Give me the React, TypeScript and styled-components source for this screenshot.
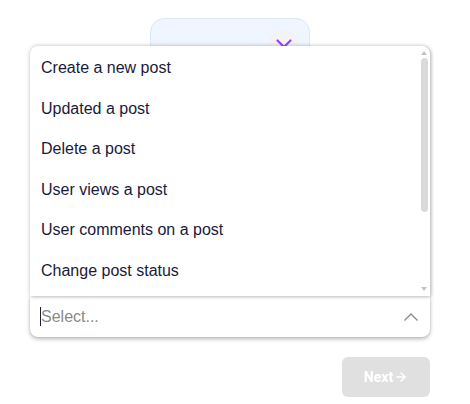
import React from "react";
import styled, { createGlobalStyle } from "styled-components";
import { ArrowRight } from "lucide-react";

const Global = createGlobalStyle`
  html, body { margin: 0; padding: 0; background: #ffffff; }
  body { font-family: "Liberation Sans", Arial, sans-serif; }
  * { box-sizing: border-box; }
`;

const Page = styled.div`
  width: 470px;
  height: 404px;
  padding: 18px 40px 0 30px;
  display: flex;
  flex-direction: column;
`;

const Stage = styled.div`
  height: 278px;
  display: flex;
  flex-direction: column;
  align-items: flex-start;
`;

const TopCard = styled.div`
  margin-left: 120px;
  width: 160px;
  height: 70px;
  background: #eff6ff;
  border: 1px solid #dbe7fb;
  border-radius: 14px;
  display: flex;
  justify-content: flex-end;
  padding: 11px 10px 0 0;
`;

const ToggleCircle = styled.div`
  width: 31px;
  height: 31px;
  border-radius: 50%;
  background: #f3f3f7;
  display: flex;
  align-items: flex-start;
  justify-content: center;
  padding-top: 9px;
  color: #9b45ec;
`;

const SelectWrap = styled.div`
  position: relative;
  width: 400px;
`;

const Control = styled.div`
  height: 41px;
  background: #ffffff;
  border-radius: 0 0 8px 8px;
  box-shadow: 0 2px 4px rgba(0, 0, 0, 0.28), 0 0 2px rgba(0, 0, 0, 0.12);
  display: flex;
  align-items: center;
  padding: 0 11px 0 10px;
`;

const Input = styled.div`
  flex: 1;
  display: flex;
  align-items: center;
  font-size: 16px;
  line-height: 20px;
  color: #8a8a8a;
`;

const Caret = styled.span`
  width: 1px;
  height: 19px;
  background: #1c1c3c;
`;

const Menu = styled.div`
  position: absolute;
  left: 0;
  right: 0;
  bottom: 100%;
  height: 250px;
  background: #ffffff;
  border-radius: 8px 8px 0 0;
  box-shadow: 0 0 4px rgba(0, 0, 0, 0.25), 2px 1px 3px rgba(0, 0, 0, 0.12);
  padding: 2px 12px 0 0;
  display: flex;
`;

const MenuList = styled.ul`
  list-style: none;
  margin: 0;
  padding: 0;
  flex: 1;
  overflow-y: auto;
  scrollbar-width: none;
  &::-webkit-scrollbar { display: none; }
`;

const Option = styled.li`
  padding: 11px 11px;
  font-size: 16px;
  line-height: 18.5px;
  color: #1a1a3a;
  cursor: default;
`;

const ScrollTrack = styled.div`
  position: absolute;
  top: 4px;
  bottom: 4px;
  right: 2px;
  width: 8px;
  display: flex;
  flex-direction: column;
  align-items: center;
`;

const ScrollArrow = styled.div<{ $down?: boolean }>`
  width: 0;
  height: 0;
  border-left: 3.5px solid transparent;
  border-right: 3.5px solid transparent;
  ${(p) =>
    p.$down
      ? "border-top: 4px solid #c4c4c4; margin-top: auto; margin-bottom: 1px;"
      : "border-bottom: 4px solid #c4c4c4; margin-top: 1px;"}
`;

const ScrollThumb = styled.div`
  width: 7px;
  height: 154px;
  margin-top: 3px;
  border-radius: 4px;
  background: #dadada;
`;

const Footer = styled.div`
  display: flex;
  justify-content: flex-end;
  margin-top: 20px;
`;

const NextButton = styled.button`
  width: 88px;
  height: 40px;
  border: none;
  border-radius: 6px;
  background: #e0e0e0;
  color: #ffffff;
  font-family: Roboto, "Liberation Sans", sans-serif;
  font-weight: 700;
  font-size: 14px;
  display: flex;
  align-items: center;
  justify-content: center;
  gap: 1px;
  padding: 0;
`;

const options = [
  "Create a new post",
  "Updated a post",
  "Delete a post",
  "User views a post",
  "User comments on a post",
  "Change post status",
];

export default function App() {
  return (
    <>
      <Global />
      <Page>
        <Stage>
          <TopCard>
            <ToggleCircle>
              <svg width="16" height="10" viewBox="0 0 16 10" fill="none">
                <polyline points="1.5,1.5 8,8 14.5,1.5" stroke="currentColor" strokeWidth="2.2" strokeLinecap="round" strokeLinejoin="round" />
              </svg>
            </ToggleCircle>
          </TopCard>
        </Stage>
        <SelectWrap>
          <Menu>
            <MenuList>
              {options.map((o) => (
                <Option key={o}>{o}</Option>
              ))}
            </MenuList>
            <ScrollTrack>
              <ScrollArrow />
              <ScrollThumb />
              <ScrollArrow $down />
            </ScrollTrack>
          </Menu>
          <Control>
            <Input>
              <Caret />
              Select...
            </Input>
            <svg width="16" height="10" viewBox="0 0 16 10" fill="none">
              <polyline points="1.5,8.5 8,2 14.5,8.5" stroke="#8a8a8a" strokeWidth="1.3" />
            </svg>
          </Control>
        </SelectWrap>
        <Footer>
          <NextButton>
            Next
            <ArrowRight size={14} strokeWidth={2.5} />
          </NextButton>
        </Footer>
      </Page>
    </>
  );
}
